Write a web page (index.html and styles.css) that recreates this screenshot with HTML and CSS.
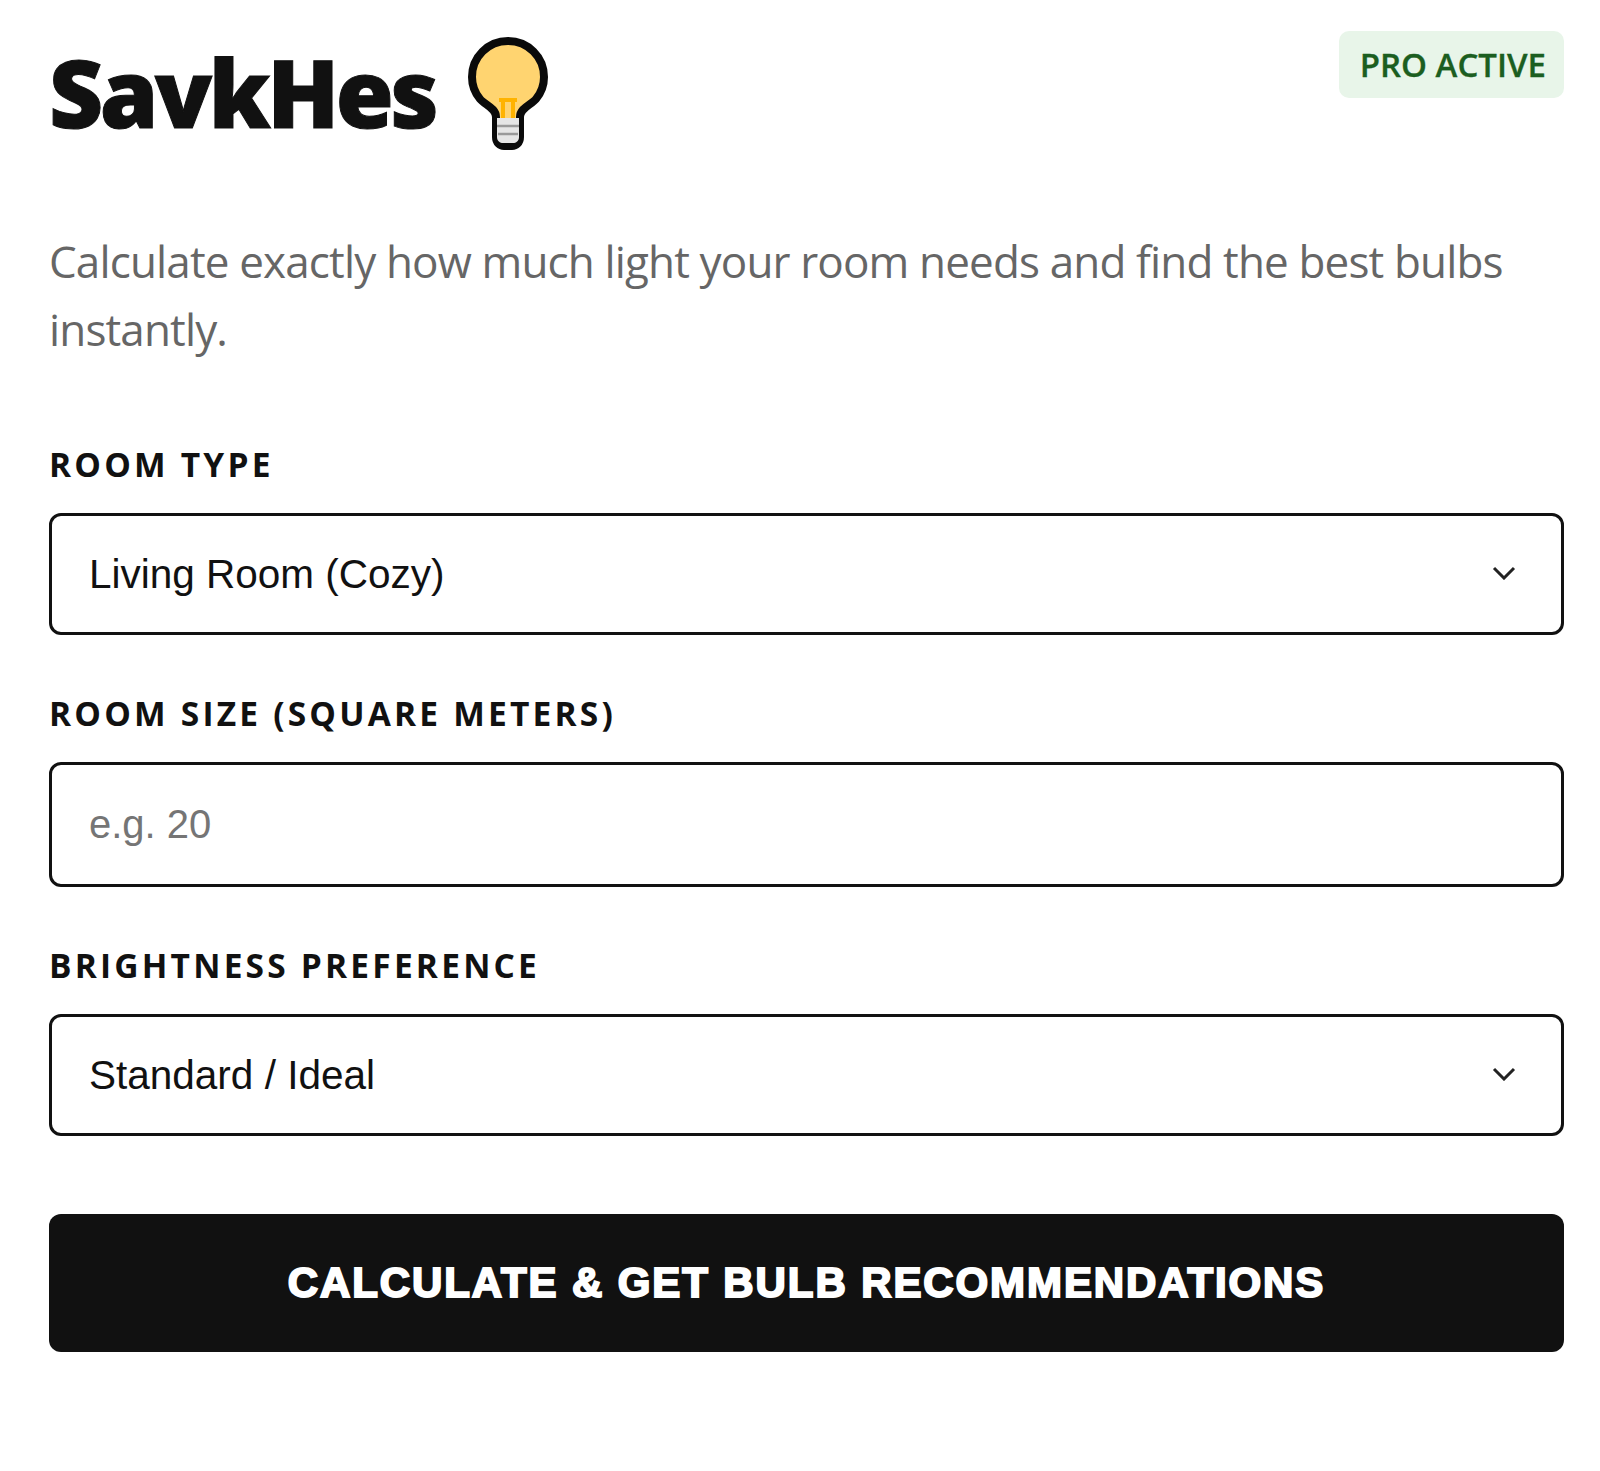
FILE: index.html
```html
<!DOCTYPE html>
<html lang="en">
<head>
    <meta charset="UTF-8">
    <meta name="viewport" content="width=device-width, initial-scale=1.0">
    <title>SavkHes</title>
    <link rel="stylesheet" href="styles.css">
</head>
<body>
    <div class="page">
        <div class="header">
            <h1>SavkHes
                <svg class="bulb" viewBox="0 0 80 114" width="80" height="114">
                    <path d="M40 4C20 4 4 20 4 40c0 9 3 16 8 22 5 6 16 9 16 18v20c0 6 4 9 8 9h8c4 0 8-3 8-9V80c0-9 11-12 16-18 5-6 8-13 8-22C76 20 60 4 40 4z" fill="#ffd470" stroke="#0a0a0a" stroke-width="8"/>
                    <path d="M31 63h18M35 63v18M45 63v18" fill="none" stroke="#ffb300" stroke-width="4"/>
                    <path d="M29 81h22v19c0 4-3 6-6 6h-10c-3 0-6-2-6-6z" fill="#e6e6e6"/>
                    <path d="M29 89h22M30 97h20" stroke="#9a9a9a" stroke-width="2.5"/>
                </svg>
            </h1>
            <div class="badge">PRO ACTIVE</div>
        </div>

        <p class="intro">Calculate exactly how much light your room needs and find the best bulbs instantly.</p>

        <form>
            <div class="form-group">
                <label for="roomType">ROOM TYPE</label>
                <div class="select-wrap">
                    <select id="roomType">
                        <option>Living Room (Cozy)</option>
                        <option>Kitchen</option>
                        <option>Bedroom</option>
                    </select>
                    <svg class="chevron" viewBox="0 0 24 14" width="24" height="14"><path d="M2 2l10 10L22 2" fill="none" stroke="#222" stroke-width="3"/></svg>
                </div>
            </div>
            <div class="form-group">
                <label for="roomSize">ROOM SIZE (SQUARE METERS)</label>
                <input type="number" id="roomSize" placeholder="e.g. 20">
            </div>
            <div class="form-group">
                <label for="brightness">BRIGHTNESS PREFERENCE</label>
                <div class="select-wrap">
                    <select id="brightness">
                        <option>Standard / Ideal</option>
                        <option>Bright</option>
                        <option>Dim</option>
                    </select>
                    <svg class="chevron" viewBox="0 0 24 14" width="24" height="14"><path d="M2 2l10 10L22 2" fill="none" stroke="#222" stroke-width="3"/></svg>
                </div>
            </div>
            <button type="button" class="calc">CALCULATE &amp; GET BULB RECOMMENDATIONS</button>
        </form>
    </div>
</body>
</html>
```

FILE: styles.css
```css
* {
    box-sizing: border-box;
}
body {
    font-family: "Open Sans", Arial, sans-serif;
    margin: 0;
    padding: 0;
    background-color: #fff;
    color: #111;
}
.page {
    padding: 31px 36px 0 49px;
}
.header {
    display: flex;
    justify-content: space-between;
    align-items: flex-start;
    height: 196px;
}
.header h1 {
    margin: 0;
    display: flex;
    align-items: flex-start;
    font-size: 94px;
    font-weight: 800;
    letter-spacing: -3.5px;
    line-height: 122px;
    color: #111;
    -webkit-text-stroke: 1px #111;
}
.bulb {
    margin: 6px 0 0 33px;
}
.badge {
    background-color: #e8f5e9;
    color: #1b5e20;
    font-size: 33px;
    font-weight: 600;
    line-height: 67px;
    padding: 0 18px 0 21px;
    border-radius: 10px;
    -webkit-text-stroke: 0.3px #1b5e20;
}
.intro {
    margin: 0 0 81px;
    font-size: 44px;
    line-height: 68px;
    color: #666;
    letter-spacing: -0.85px;
}
.form-group {
    margin-bottom: 58px;
}
.form-group label {
    display: block;
    font-size: 33.5px;
    font-weight: 700;
    letter-spacing: 3.2px;
    line-height: 40px;
    margin-bottom: 29px;
}
.form-group:last-of-type {
    margin-bottom: 44px;
}
.select-wrap {
    position: relative;
}
.chevron {
    position: absolute;
    right: 48px;
    top: 53px;
}
.form-group select, .form-group input {
    display: block;
    width: 100%;
    height: 122px;
    padding: 0 37px;
    font-family: "Liberation Sans", Arial, sans-serif;
    font-size: 40.5px;
    color: #111;
    background: #fff;
    border: 3px solid #111;
    border-radius: 12px;
    appearance: none;
    outline: none;
}
.form-group input {
    height: 125px;
    font-size: 40px;
}
.calc {
    display: block;
    width: 100%;
    height: 138px;
    margin-top: 78px;
    border: none;
    border-radius: 12px;
    background-color: #111;
    color: #fff;
    font-family: "Liberation Sans", Arial, sans-serif;
    font-size: 42px;
    font-weight: 700;
    letter-spacing: 1.9px;
    -webkit-text-stroke: 2px #fff;
    cursor: pointer;
}
```
